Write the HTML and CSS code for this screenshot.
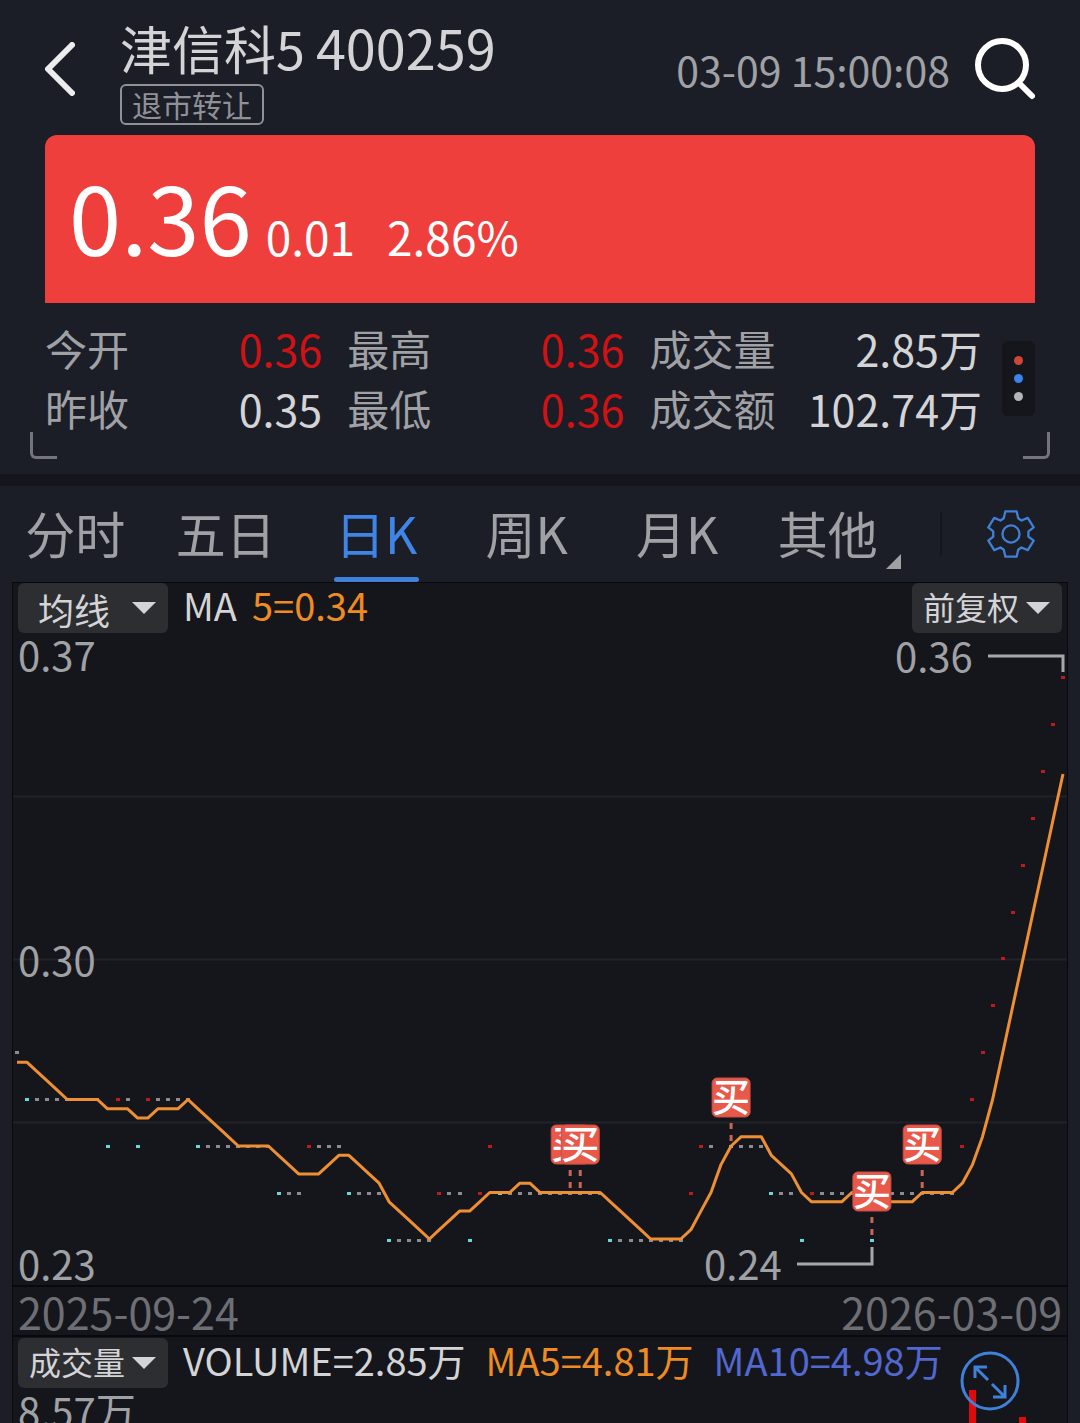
FILE: index.html
```html
<!DOCTYPE html>
<html lang="zh-CN">
<head>
<meta charset="utf-8">
<meta name="viewport" content="width=device-width, initial-scale=1">
<title>津信科5 400259</title>
<link rel="stylesheet" href="styles.css">
</head>
<body>
<header class="topbar">
  <button class="icon-btn back" type="button" aria-label="返回">
    <svg width="30" height="54" viewBox="0 0 30 54"><path d="M27 3 3 27l24 24" fill="none" stroke="#ececee" stroke-width="6" stroke-linecap="round" stroke-linejoin="round"/></svg>
  </button>
  <div class="title">
    <h1 class="stock"><span class="stock-name">津信科5</span><span class="stock-code">400259</span></h1>
    <span class="tag">退市转让</span>
  </div>
  <time class="clock">03-09 15:00:08</time>
  <button class="icon-btn" type="button" aria-label="搜索">
    <svg width="60" height="62" viewBox="0 0 60 62"><circle cx="27" cy="27" r="24" fill="none" stroke="#fff" stroke-width="6"/><path d="M44 45l13 13" stroke="#fff" stroke-width="6" stroke-linecap="round"/></svg>
  </button>
</header>

<main>
  <section class="quote">
    <div class="price-card">
      <span class="price">0.36</span>
      <span class="change">0.01</span>
      <span class="percent">2.86%</span>
    </div>
    <div class="summary">
      <dl class="stats">
        <div class="stat"><dt>今开</dt><dd class="up">0.36</dd></div>
        <div class="stat"><dt>最高</dt><dd class="up">0.36</dd></div>
        <div class="stat"><dt>成交量</dt><dd>2.85万</dd></div>
        <div class="stat"><dt>昨收</dt><dd>0.35</dd></div>
        <div class="stat"><dt>最低</dt><dd class="up">0.36</dd></div>
        <div class="stat"><dt>成交额</dt><dd>102.74万</dd></div>
      </dl>
      <button class="more" type="button" aria-label="更多">
        <span class="dot dot-red"></span><span class="dot dot-blue"></span><span class="dot dot-grey"></span>
      </button>
    </div>
  </section>

  <div class="tabbar">
    <nav class="tabs">
      <button class="tab" type="button">分时</button>
      <button class="tab" type="button">五日</button>
      <button class="tab active" type="button">日K</button>
      <button class="tab" type="button">周K</button>
      <button class="tab" type="button">月K</button>
      <button class="tab has-more" type="button">其他</button>
    </nav>
    <div class="settings">
      <button class="icon-btn" type="button" aria-label="设置">
        <svg width="48" height="48" viewBox="0 0 146 144" fill="none" stroke="#3f80d8" stroke-width="7" stroke-linejoin="round"><path d="M56 3H90L95 24 105 31 124 23 142 52 126 64V80L142 92 124 121 105 113 95 120 90 141H56L51 120 41 113 22 121 4 92 19 80V64L4 52 22 23 41 31 51 24Z"/><circle cx="73" cy="72" r="26"/></svg>
      </button>
    </div>
  </div>

  <section class="panel">
    <div class="legend">
      <label class="picker picker-wide"><select aria-label="主图指标"><option>均线</option></select></label>
      <span class="series">MA</span>
      <span class="series ma5 near">5=0.34</span>
      <label class="picker push"><select aria-label="复权方式"><option>前复权</option></select></label>
    </div>
    <svg class="chart" id="kline" viewBox="0 0 1054 652" role="img" aria-label="日K线图">
      <g class="grid"><path d="M0 163.5H1054M0 326.5H1054M0 489.5H1054"/></g>
      <g class="axis">
        <text x="5" y="38">0.37</text>
        <text x="5" y="343">0.30</text>
        <text x="5" y="647">0.23</text>
      </g>
      <g id="candles"></g>
      <path id="ma5" class="ma-line"/>
      <g class="extreme">
        <text x="882" y="39">0.36</text>
        <path d="M975 23H1050V39"/>
        <text x="691" y="647">0.24</text>
        <path d="M784 631H859V614"/>
      </g>
      <g id="marks"></g>
    </svg>
    <div class="dates"><span>2025-09-24</span><span>2026-03-09</span></div>
    <div class="volume">
      <div class="legend">
        <label class="picker"><select aria-label="副图指标"><option>成交量</option></select></label>
        <span class="series">VOLUME=2.85万</span>
        <span class="series ma5">MA5=4.81万</span>
        <span class="series ma10">MA10=4.98万</span>
      </div>
      <div class="bars">
        <span class="bars-max">8.57万</span>
        <svg class="bars-plot" viewBox="0 0 1054 35"><path d="M956 2h7v33h-7zM1006 29h7v6h-7z" fill="#dd0b0b"/></svg>
      </div>
      <button class="icon-btn expand" type="button" aria-label="全屏">
        <svg width="60" height="60" viewBox="0 0 60 60" fill="none" stroke="#3f80d8" stroke-width="3"><circle cx="30" cy="30" r="28"/><path d="M15 27V16H27M16 17 28 29M32 33 44 45M33 46H45V34"/></svg>
      </button>
    </div>
  </section>
</main>
<script src="chart.js"></script>
</body>
</html>
```

FILE: styles.css
```css
*, *::before, *::after { box-sizing: border-box; }

body {
  margin: 0;
  background: #1b1e27;
  color: #d4d4d6;
  font-family: "Noto Sans CJK SC", "Noto Sans", sans-serif;
}

button, select {
  margin: 0;
  padding: 0;
  border: 0;
  background: none;
  color: inherit;
  font: inherit;
}

.icon-btn svg { display: block; }

/* top bar */
.topbar {
  display: flex;
  align-items: center;
  height: 135px;
  padding: 2px 45px 0;
}
.back { margin-right: 45px; }
.title {
  display: flex;
  flex-direction: column;
  align-items: flex-start;
  gap: 10px;
  padding-top: 8px;
}
.stock {
  display: flex;
  align-items: baseline;
  gap: 11px;
  margin: 0;
  font-weight: 400;
  line-height: 52px;
}
.stock-name { font-size: 52px; }
.stock-code { font-size: 54px; }
.tag {
  padding: 0 10px;
  border: 2px solid #909197;
  border-radius: 6px;
  color: #909197;
  font-size: 30px;
  line-height: 37px;
}
.clock {
  margin: 0 25px 0 auto;
  color: #a0a1a5;
  font-size: 41px;
}

/* quote */
.quote {
  position: relative;
  padding: 0 45px 36px;
  border-bottom: 12px solid #15161b;
}
.quote::before, .quote::after {
  content: "";
  position: absolute;
  bottom: 15px;
  width: 27px;
  height: 27px;
  border: solid #74757b;
}
.quote::before {
  left: 30px;
  border-width: 0 0 3px 3px;
  border-bottom-left-radius: 6px;
}
.quote::after {
  right: 30px;
  border-width: 0 3px 3px 0;
  border-bottom-right-radius: 6px;
}
.price-card {
  display: flex;
  align-items: baseline;
  height: 168px;
  padding: 10px 24px 0;
  border-radius: 12px 12px 0 0;
  background: #ef3f3d;
  color: #fff;
}
.price { font-size: 94px; line-height: 140px; }
.change, .percent { font-size: 46px; }
.change { margin: 0 32px 0 14px; }

.summary {
  display: flex;
  align-items: center;
  gap: 20px;
  padding-top: 15px;
}
.stats {
  flex: 1;
  display: grid;
  grid-template-columns: 5fr 5fr 6fr;
  column-gap: 25px;
  margin: 0;
  line-height: 60px;
}
.stat {
  display: flex;
  justify-content: space-between;
}
.stat dt { color: #a0a1a5; font-size: 42px; }
.stat dd { margin: 0; font-size: 43px; }
.stat .up { color: #d01214; }
.more {
  display: flex;
  flex-direction: column;
  align-items: center;
  justify-content: center;
  gap: 9px;
  width: 33px;
  height: 75px;
  border-radius: 6px;
  background: #15161b;
}
.dot { width: 9px; height: 9px; border-radius: 50%; }
.dot-red { background: #cf4636; }
.dot-blue { background: #3b82ee; }
.dot-grey { background: #b4b4b8; }

/* period tabs */
.tabbar { display: flex; height: 96px; }
.tabs { flex: 1; display: flex; }
.tab {
  position: relative;
  flex: 1;
  padding-bottom: 4px;
  color: #a0a1a5;
  font-size: 50px;
}
.tab.active { color: #3f85e6; }
.tab.active::after {
  content: "";
  position: absolute;
  left: 33px;
  right: 33px;
  bottom: 0;
  height: 5px;
  border-radius: 3px;
  background: #3f80d8;
}
.has-more::after {
  content: "";
  position: absolute;
  right: 2px;
  bottom: 13px;
  width: 15px;
  height: 15px;
  background: #a0a1a5;
  clip-path: polygon(100% 0, 100% 100%, 0 100%);
}
.settings {
  display: flex;
  align-items: center;
  width: 177px;
}
.settings::before {
  content: "";
  width: 2px;
  height: 44px;
  margin: 0 45px 0 37px;
  background: #15171d;
}

/* chart panel */
.panel {
  margin: 0 12px;
  border: 1px solid #08090c;
  border-bottom: 0;
  background: #15161b;
}
.legend {
  display: flex;
  align-items: center;
  height: 50px;
  padding: 0 5px;
}
.series {
  margin-left: 20px;
  padding-bottom: 6px;
  font-size: 38px;
  line-height: 44px;
  white-space: nowrap;
}
.picker + .series { margin-left: 15px; }
.series.near { margin-left: 15px; }
.ma5 { color: #ee8b22; }
.ma10 { color: #5268cf; }
.picker {
  position: relative;
  width: 150px;
  height: 50px;
  border-radius: 6px;
  background: #2d2e32;
}
.picker.push { margin-left: auto; }
.picker select {
  appearance: none;
  width: 100%;
  height: 100%;
  padding: 0 0 4px 11px;
  font-size: 32px;
}
.picker-wide select { padding-left: 20px; font-size: 36px; }
.picker::after {
  content: "";
  position: absolute;
  top: 19px;
  right: 12px;
  width: 24px;
  height: 12px;
  background: #d4d4d6;
  clip-path: polygon(0 0, 100% 0, 50% 100%);
  pointer-events: none;
}

.chart { display: block; width: 100%; height: auto; overflow: visible; }
.chart text { font-size: 40px; fill: #a0a1a5; }
.grid path { stroke: #212227; stroke-width: 2; }
.extreme path { fill: none; stroke: #a6a7ab; stroke-width: 3; }
.ma-line { fill: none; stroke: #ee8f33; stroke-width: 3; stroke-linejoin: round; }
.candle-up { fill: #bd1a1e; }
.candle-down { fill: #6ad6d8; }
.candle-flat { fill: #8b8c93; }
.mark rect { fill: #e9594a; stroke: #c94d42; stroke-width: 1; }
.mark path { stroke: #c96558; stroke-width: 3; stroke-dasharray: 6 6; }
.chart .mark text { fill: #fff; font-size: 38px; font-weight: 500; text-anchor: middle; }

.dates {
  display: flex;
  justify-content: space-between;
  padding: 0 5px;
  border: solid #08090c;
  border-width: 2px 0;
  color: #6e6f74;
  font-size: 43px;
  line-height: 48px;
}

.volume { position: relative; padding-top: 1px; }
.bars { position: relative; height: 35px; overflow: hidden; }
.bars-max {
  display: block;
  padding-left: 5px;
  color: #a0a1a5;
  font-size: 40px;
  line-height: 44px;
}
.bars-plot { position: absolute; left: 0; bottom: 0; width: 100%; }
.expand { position: absolute; right: 47px; top: 14px; }
```

FILE: chart.js
```js
const SVG = "http://www.w3.org/2000/svg";

// Closing prices in cents as runs of [price, days].
const runs = [
  [27, 1], [28, 4], [27, 8], [26, 1], [27, 2], [26, 1], [27, 5], [26, 8],
  [25, 3], [26, 4], [25, 4], [24, 5], [25, 3], [24, 1], [25, 1], [26, 1],
  [25, 11], [24, 8], [25, 1], [26, 2], [27, 1], [26, 4], [25, 3], [24, 1],
  [25, 6], [24, 1], [25, 8], [26, 1], [27, 1], [28, 1], [29, 1], [30, 1],
  [31, 1], [32, 1], [33, 1], [34, 1], [35, 1], [36, 1]
];
const closes = runs.flatMap(([price, days]) => Array(days).fill(price));
const LEAD = 4; // days before the first visible one, used for the average
const days = closes.length - LEAD;
const x = i => 4 + i * 1046 / (days - 1);

function add(parent, name, attrs, text) {
  const el = document.createElementNS(SVG, name);
  for (const key in attrs) el.setAttribute(key, attrs[key]);
  if (text) el.textContent = text;
  parent.appendChild(el);
  return el;
}

const candles = document.getElementById("candles");
const line = [];
for (let i = 0; i < days; i++) {
  const close = closes[i + LEAD];
  const diff = close - closes[i + LEAD - 1];
  const kind = diff > 0 ? "up" : diff < 0 ? "down" : "flat";
  add(candles, "rect", {
    class: "candle-" + kind,
    x: Math.round(x(i) - 2), y: Math.round(606 - (close - 24) * 46.92), width: 4, height: 3
  });
  const mean = closes.slice(i, i + 5).reduce((a, b) => a + b) / 5;
  line.push(x(i).toFixed(1) + " " + (606 - (mean - 24) * 46.5).toFixed(1));
}
document.getElementById("ma5").setAttribute("d", "M" + line.join("L"));

// Buy marks: day index, top of the badge, start of the dashed stem.
const marks = document.getElementById("marks");
[[55, 492, 537], [56, 492, 537], [71, 445, 490], [85, 539, 584], [90, 492, 537]]
  .forEach(([day, top, stem]) => {
    const g = add(marks, "g", { class: "mark" });
    add(g, "path", { d: `M${x(day)} ${stem}v18` });
    add(g, "rect", { x: x(day) - 19, y: top, width: 38, height: 39, rx: 5 });
    add(g, "text", { x: x(day), y: top + 33 }, "买");
  });
```
